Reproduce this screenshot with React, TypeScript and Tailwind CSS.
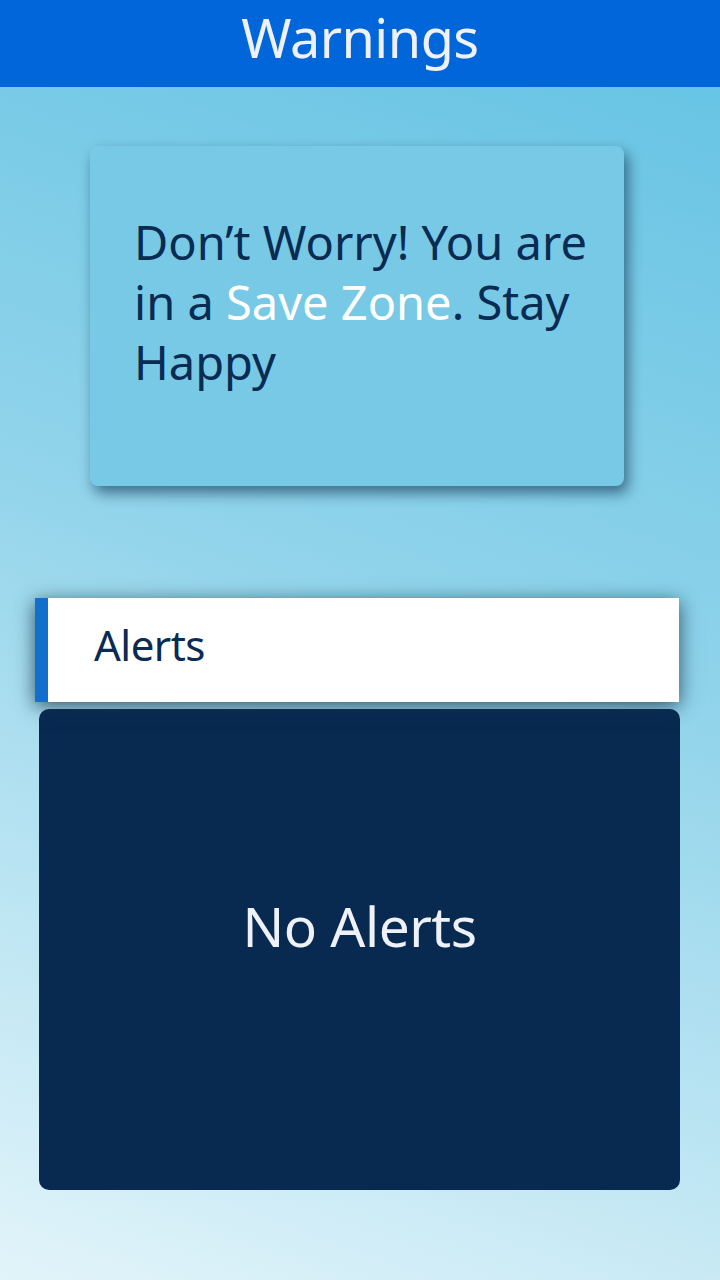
export default function App() {
  const font = { fontFamily: '"Noto Sans", "Open Sans", sans-serif' };
  return (
    <div
      className="w-[720px] h-[1280px] flex flex-col bg-[linear-gradient(200deg,#62c2e3_0%,#8fd3ea_45%,#e2f4fa_100%)] overflow-hidden"
      style={font}
    >
      <div className="h-[87px] bg-[#0066da] flex items-center justify-center">
        <span className="text-[54px] leading-none text-[#eef1f7] tracking-[-0.5px] -mt-[13px]">Warnings</span>
      </div>
      <div className="pl-[90px] pt-[59px]">
        <div className="w-[534px] h-[340px] rounded-[8px] bg-[#77c9e6] shadow-[4px_7px_14px_rgba(10,40,70,0.6)] pl-[44px] pr-[20px] pt-[66px]">
          <p className="text-[47px] leading-[60px] text-[#0a2b52]">
            Don’t Worry! You are in a <span className="text-white">Save Zone</span>. Stay Happy
          </p>
        </div>
      </div>
      <div className="pl-[35px] pt-[112px]">
        <div className="w-[644px] h-[104px] bg-white border-l-[13px] border-[#126fcc] shadow-[0_4px_18px_rgba(20,50,70,0.8)] flex items-center pl-[46px] relative z-10">
          <span className="text-[42px] text-[#0a2b52] tracking-[-0.5px] -mt-[12px]">Alerts</span>
        </div>
      </div>
      <div className="pl-[39px] pt-[7px]">
        <div className="w-[641px] h-[481px] rounded-[10px] bg-[#082a51] flex items-center justify-center">
          <span className="text-[55px] text-[#eef1f7] tracking-[-0.5px] -mt-[46px]">No Alerts</span>
        </div>
      </div>
    </div>
  );
}
